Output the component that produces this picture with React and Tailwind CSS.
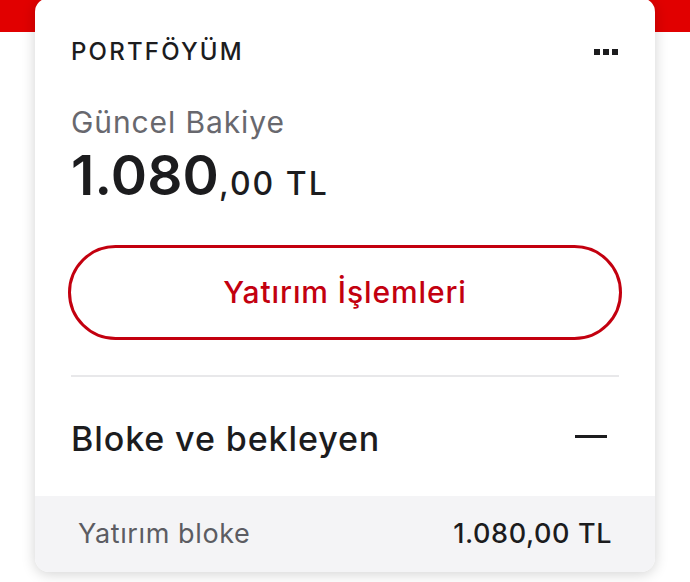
export default function App() {
  return (
    <div className="w-[690px] h-[582px] bg-white overflow-hidden" style={{ fontFamily: "Inter, 'Noto Sans', sans-serif" }}>
      <div className="h-[32px] bg-[#e10000]" />
      <div className="relative -mt-[34px] mx-[35px] rounded-[14px] bg-white shadow-[0_2px_14px_rgba(0,0,0,0.18)] overflow-hidden">
        <div className="px-[36px]">
          {/* header */}
          <div className="flex items-center justify-between pt-[36px]">
            <h3 className="text-[24px] font-medium text-[#1c1c1e] tracking-[2.2px]">PORTFÖYÜM</h3>
            <div className="flex gap-[3px] pr-[1px]">
              <span className="w-[6px] h-[6px] bg-[#1c1c1e]" />
              <span className="w-[6px] h-[6px] bg-[#1c1c1e]" />
              <span className="w-[6px] h-[6px] bg-[#1c1c1e]" />
            </div>
          </div>

          {/* balance */}
          <div className="mt-[34px] text-[30px] leading-[36px] text-[#68686e] tracking-[0.9px]">Güncel Bakiye</div>
          <div className="flex items-baseline text-[#1c1c1e] leading-none mt-[8px]">
            <span className="text-[55px] font-semibold tracking-[0.2px]">1.080</span>
            <span className="text-[32px] font-medium tracking-[2px]">,00 TL</span>
          </div>

          {/* button */}
          <button className="mt-[42px] w-[554px] h-[95px] -ml-[3px] rounded-full border-[3px] border-[#c3000f] text-[#c3000f] text-[30px] font-medium tracking-[0.9px]">
            Yatırım İşlemleri
          </button>

          <div className="mt-[35px] h-[2px] bg-[#e8e8ea]" />

          {/* blocked */}
          <div className="flex items-center justify-between h-[119px]">
            <span className="text-[34px] font-medium text-[#1c1c1e] tracking-[0.9px] pt-[4px]">Bloke ve bekleyen</span>
            <span className="w-[32px] h-[3px] bg-[#1c1c1e] mr-[12px]" />
          </div>
        </div>
        <div className="flex items-center justify-between h-[76px] bg-[#f4f4f6] pl-[43px] pr-[43px]">
          <span className="text-[27px] text-[#5c5c62] tracking-[0.6px]">Yatırım bloke</span>
          <span className="text-[27px] font-medium text-[#1c1c1e] tracking-[0.6px]">1.080,00 TL</span>
        </div>
      </div>
    </div>
  );
}
